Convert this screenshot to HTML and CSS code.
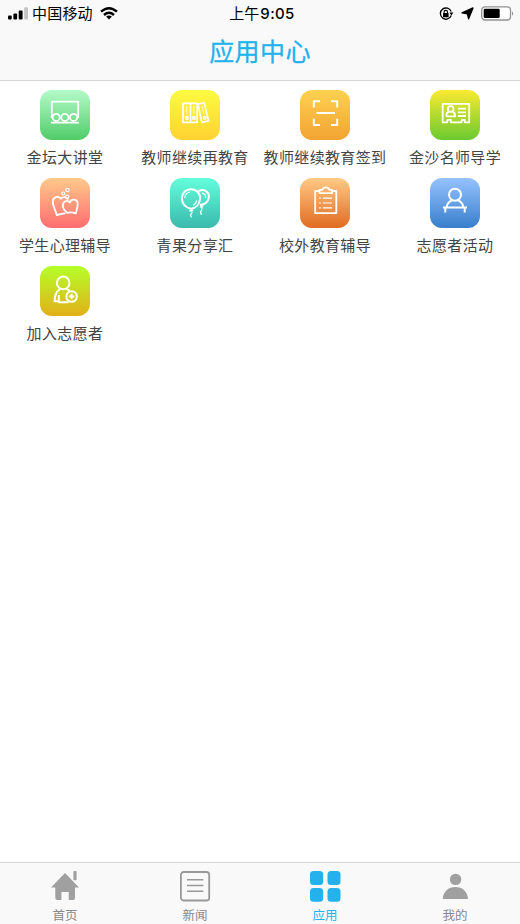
FILE: index.html
```html
<!DOCTYPE html>
<html lang="zh-CN">
<head>
<meta charset="utf-8">
<title>应用中心</title>
<link rel="stylesheet" href="styles.css">
</head>
<body>
<div class="screen">
  <header class="header">
    <div class="status">
      <div class="status-left">
        <svg class="signal" width="20" height="13" viewBox="0 0 20 13"><rect x="0" y="8.5" width="3.7" height="4" rx="1"/><rect x="5.4" y="6.5" width="3.7" height="6" rx="1"/><rect x="10.7" y="3.5" width="3.9" height="9" rx="1"/><rect x="16.2" y="0.3" width="3.8" height="12.2" rx="1" fill="#c4c4c4"/></svg>
        <span class="carrier">中国移动</span>
        <svg class="wifi" width="18" height="13" viewBox="0 0 18 13"><g fill="none" stroke="#000" stroke-width="2.4"><path d="M1 4.7Q9-2.2 17 4.7"/><path d="M4 8Q9 3.7 14 8"/></g><path d="M6.1 9.6Q9 7.4 11.9 9.6L9 12.5Z"/></svg>
      </div>
      <div class="time">上午<b>9:05</b></div>
      <div class="status-right">
        <svg width="15" height="14" viewBox="0 0 15 14"><path d="M12.2 8.6A5.6 5.6 0 1 1 12.2 4.6" fill="none" stroke="#000" stroke-width="1.3"/><path d="M10.4 5.6H14.4L12.4 8.4Z"/><rect x="4" y="6" width="5.6" height="4.3" rx=".6"/><path d="M5.1 6.3V5.1a1.7 1.7 0 0 1 3.4 0V6.3" fill="none" stroke="#000" stroke-width="1.1"/></svg>
        <svg class="arrow" width="13" height="13" viewBox="0 0 13 13"><path d="M12 .9L7.6 11.8L6.4 6.8L1 5.8Z" stroke="#000" stroke-width="1.3" stroke-linejoin="round"/></svg>
        <svg class="battery" width="33" height="15" viewBox="0 0 33 15"><rect x=".7" y=".8" width="28.8" height="13.2" rx="3.4" fill="#fff" stroke="#929292" stroke-width="1.3"/><rect x="2.7" y="2.8" width="16" height="9.2" rx="1.3"/><path d="M31 5.2Q33.2 7.4 31 9.7Z" fill="#929292"/></svg>
      </div>
    </div>
    <h1 class="title">应用中心</h1>
  </header>

  <main class="apps">
    <a class="app">
      <svg class="tile lecture" viewBox="0 0 50 50"><path d="M11.8 28V11.6H38.2V28M11 32.7H39"/><circle cx="16.2" cy="27.4" r="3.6"/><circle cx="24.9" cy="27.4" r="3.6"/><circle cx="33.6" cy="27.4" r="3.6"/></svg>
      <span class="label">金坛大讲堂</span>
    </a>
    <a class="app">
      <svg class="tile training" viewBox="0 0 50 50"><path d="M13 13.4H20.5V32.4H13ZM20.5 13.4H27.2V32.4H20.5ZM28 14.2L34.2 12.8L38.5 30.8L31.8 32.3Z"/><path class="slot" d="M16.8 16V24.5M23.9 16V24.5M32 16.2L33.8 23.8"/><circle cx="16.8" cy="28" r="1.3"/><circle cx="23.9" cy="28" r="1.3"/><circle cx="34.6" cy="27.8" r="1.3"/></svg>
      <span class="label">教师继续再教育</span>
    </a>
    <a class="app">
      <svg class="tile checkin" viewBox="0 0 50 50"><path d="M13.8 17.5V11.3H20M31 11.3H37.2V17.5M37.2 28.7V35H31M20 35H13.8V28.7M16.5 23.1H35"/></svg>
      <span class="label">教师继续教育签到</span>
    </a>
    <a class="app">
      <svg class="tile mentor" viewBox="0 0 50 50"><path d="M12.7 13.8H39.2V32.3H34.8V29.8H31.6V32.3H20.8V29.8H17.3V32.3H12.7Z"/><circle cx="20.7" cy="19" r="2.9"/><path d="M16.2 26.4Q16 22.8 19 21.7M22.4 21.7Q25.3 22.8 25.2 26.4H16.2M28 18.7H36M28 22.4H36M28 26H36"/></svg>
      <span class="label">金沙名师导学</span>
    </a>
    <a class="app">
      <svg class="tile mind" viewBox="0 0 50 50"><path d="M25.5 35.2L16.8 37C15.5 32.5 12.5 27 12.8 23.5C13.1 18.8 18.4 17.4 20.8 20.8C23 18.2 26.8 18.8 28 21.8"/><path d="M27.2 34.8C23.5 32 22 28.7 23.4 25.2C24.8 22 28.6 22.2 29.9 24.5C31 20.7 36.3 20.7 37.5 24.2C38.4 27.5 36.6 31.6 35.8 35.4Q31.2 33.7 27.2 34.8Z"/><g class="fine"><circle cx="23.3" cy="15.5" r="1.5"/><circle cx="27.5" cy="12" r="1.7"/><circle cx="27.2" cy="18.8" r="1.7"/></g></svg>
      <span class="label">学生心理辅导</span>
    </a>
    <a class="app">
      <svg class="tile share" viewBox="0 0 50 50"><path d="M28.5 13.2C34 9.7 39.6 14.4 38.8 19.8C38.2 23.9 34.5 26.8 30 26.9"/><path d="M21.2 30.7C15 29.5 11.6 25 11.9 20C12.2 14.5 16 11.1 21 11.2C26.7 11.3 30.4 15.4 30 21C29.6 26.4 26 30 21.2 30.7Z"/><path class="fine" d="M14.7 20Q15.4 14.8 20 14M26.9 22.5Q26 26 23 27.2M32 15.2Q36.5 16.2 35.5 20.2M19.8 32.8L21 30.7L22.8 32.4ZM30.3 29L31.3 27L32.8 28.8ZM21.4 33Q22.7 34.5 21.2 35.8T21.6 39.3M31.4 29Q32.6 31 31.2 32.8T31.6 36.7"/></svg>
      <span class="label">青果分享汇</span>
    </a>
    <a class="app">
      <svg class="tile outside" viewBox="0 0 50 50"><path d="M19.5 13H15.2V35.2H36.3V13H32M19.5 15.2V11.8H22.3Q23 9.4 25.8 9.4T29.3 11.8H32V15.2Z"/><path class="fine" d="M19 20.2H20.8M19 25H20.8M19 29.8H20.8M22.8 20.2H32M22.8 25H32M22.8 29.8H32"/></svg>
      <span class="label">校外教育辅导</span>
    </a>
    <a class="app">
      <svg class="tile volunteer" viewBox="0 0 50 50"><circle cx="25" cy="16.8" r="6"/><path d="M22.2 22.2Q17.5 24 16.6 29M27.8 22.2Q32.5 24 33.4 29M13 29.5H37M15.3 29.5V34.6M34.7 29.5V34.6"/></svg>
      <span class="label">志愿者活动</span>
    </a>
    <a class="app">
      <svg class="tile join" viewBox="0 0 50 50"><circle cx="23.2" cy="16.9" r="6.3"/><path d="M20.1 23Q14.4 26.8 14.6 35.2H18.3M18.8 29V36.3H28.5M26.5 23Q28.8 23.7 29.8 25.5"/><circle cx="31.6" cy="30.5" r="5.3"/><path d="M28.8 30.5H34.4M31.6 27.7V33.3"/></svg>
      <span class="label">加入志愿者</span>
    </a>
  </main>

  <nav class="tabs">
    <a class="tab"><svg width="32" height="32" viewBox="0 0 32 32"><path d="M16 2L30 16.4H26V27Q26 29 24 29H19.7V21H12.4V29H8.3Q6.3 29 6.3 27V16.4H2Z"/><rect x="24.4" y="0" width="3.2" height="9.3" rx="1"/></svg><span>首页</span></a>
    <a class="tab"><svg width="32" height="32" viewBox="0 0 32 32"><g fill="none" stroke="#999"><rect x="1.9" y="1" width="28.3" height="28.5" rx="2.8" stroke-width="1.8"/><path d="M8 8.7H24.4M8 14.5H24.4M8 20.2H24.4" stroke-width="1.6"/></g></svg><span>新闻</span></a>
    <a class="tab active"><svg width="32" height="32" viewBox="0 0 32 32"><rect x="1" y="0" width="13.2" height="14" rx="3.5"/><rect x="18.5" y="0" width="13" height="14" rx="3.5"/><rect x="1" y="17" width="13.2" height="13.7" rx="3.5"/><rect x="18.5" y="17" width="13" height="13.7" rx="3.5"/></svg><span>应用</span></a>
    <a class="tab"><svg width="32" height="32" viewBox="0 0 32 32"><circle cx="16.6" cy="8.4" r="5.7"/><path d="M3.7 28C4.2 20.5 9.2 16 16.4 16S28.5 20.5 29 28Z"/></svg><span>我的</span></a>
  </nav>
</div>
</body>
</html>
```
FILE: styles.css
```css
* { box-sizing: border-box; }
body {
  margin: 0;
  background: #fff;
  font-family: "Noto Sans CJK SC", sans-serif;
}
svg { display: block; }
.screen {
  display: flex;
  flex-direction: column;
  width: 520px;
  height: 924px;
  overflow: hidden;
}
.header {
  height: 81px;
  background: #f9f9f9;
  border-bottom: 1px solid #d5d5d5;
}
.status {
  display: grid;
  grid-template-columns: 1fr auto 1fr;
  align-items: center;
  height: 26px;
  padding: 0 6px 0 8px;
  font-size: 15px;
  color: #000;
}
.status-left, .status-right { display: flex; align-items: center; }
.status-left { gap: 4px; }
.carrier { line-height: 24px; margin-bottom: 2px; letter-spacing: .2px; }
.signal, .wifi { margin-bottom: 1px; }
.wifi { margin-left: 3px; }
.time { padding-left: 2px; line-height: 26px; }
.time b {
  margin-left: 1px;
  font-family: Inter, "Liberation Sans", sans-serif;
  font-weight: 500;
  letter-spacing: .35px;
}
.status-right { justify-content: flex-end; }
.arrow { margin-left: 7px; }
.battery { margin-left: 7px; }
.title {
  margin: 0;
  text-align: center;
  font-size: 25px;
  font-weight: 400;
  line-height: 48px;
  letter-spacing: .4px;
  color: #1fb2ee;
  -webkit-text-stroke: .3px #1fb2ee;
}
.apps {
  flex: 1;
  display: grid;
  grid-template-columns: repeat(4, 130px);
  grid-auto-rows: 88px;
  align-content: start;
  padding-top: 9.4px;
}
.app { display: flex; flex-direction: column; align-items: center; }
.tile {
  width: 50px;
  height: 50px;
  border-radius: 12px;
  fill: none;
  stroke: #fff;
  stroke-width: 1.8;
  stroke-linejoin: round;
}
.fine { stroke-width: 1.2; }
.slot { stroke-width: 1; opacity: .85; }
.lecture { background: linear-gradient(#b4fac8, #51cc69); }
.training { background: linear-gradient(#fcfb40, #ffd232); }
.checkin { background: linear-gradient(#fdd150, #f3a332); }
.mentor { background: linear-gradient(#fbea31, #6bca30); }
.mind { background: linear-gradient(#ffc98a, #ff6d70); }
.share { background: linear-gradient(#62fedb, #3ab9ad); }
.outside { background: linear-gradient(#ffca85, #e16b22); }
.volunteer { background: linear-gradient(#96c2ff, #387fcb); }
.join { background: linear-gradient(#b5ff29, #e2b017); }
.checkin, .share, .join, .volunteer { stroke-width: 2; }
.training { stroke-width: 1.7; }
.label {
  margin-top: 4.4px;
  font-size: 15px;
  line-height: 24px;
  letter-spacing: .35px;
  white-space: nowrap;
  color: #444;
}
.tabs {
  display: grid;
  grid-template-columns: repeat(4, 1fr);
  height: 62px;
  background: #f9f9f9;
  border-top: 1px solid #d5d5d5;
}
.tab {
  display: flex;
  flex-direction: column;
  align-items: center;
  padding-top: 8px;
  font-size: 12.5px;
  line-height: 20px;
  color: #888;
  fill: #a0a0a0;
}
.tab span { margin-top: 2px; }
.tab.active { color: #25b1ec; fill: #25b1ec; }
```
